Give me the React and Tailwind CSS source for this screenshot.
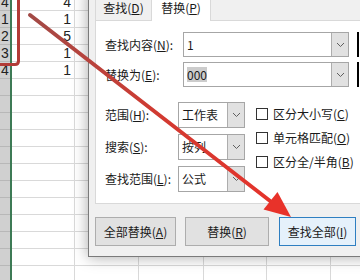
import React from "react";

const rows = [
  { head: "4", val: "4" },
  { head: "1", val: "1" },
  { head: "2", val: "5" },
  { head: "3", val: "1" },
  { head: "4", val: "1" },
];

// small chevron used by the combo boxes
const Chevron = () => (
  <svg width="9" height="6" viewBox="0 0 9 6">
    <polyline points="1,1 4.5,4.5 8,1" fill="none" stroke="#606060" strokeWidth="1" />
  </svg>
);

const Combo = ({ text, selected, className }) => (
  <div className={`flex h-full bg-white border border-[#a6a6a6] ${className}`}>
    <div className="flex-1 flex items-center pl-[3px]">
      {selected ? <span className="bg-[#cccccc] leading-[15px]">{text}</span> : text}
    </div>
    <div className="w-[17px] flex items-center justify-center bg-[#e1e1e1] border-l border-[#adadad]">
      <Chevron />
    </div>
  </div>
);

const Check = ({ children }) => (
  <div className="h-[24px] flex items-center gap-[5px]">
    <div className="w-[12px] h-[12px] border border-[#333333] bg-white" />
    <span>{children}</span>
  </div>
);

const Sheet = () => (
  <div className="-mt-[6px] flex flex-col font-['Liberation_Sans',sans-serif] text-[14px] text-[#222222]">
    {Array.from({ length: 18 }).map((_, i) => {
      const r = rows[i];
      return (
        <div key={i} className="flex h-[17px]">
          <div className="w-[12px] shrink-0 flex">
            <div className="w-[10px] bg-[#d0d0d0] border-b border-[#b8b8b8] text-center leading-[16px]">
              {r ? r.head : ""}
            </div>
            <div className="w-[2px] bg-[#3d7a55]" />
          </div>
          <div className="w-[63px] shrink-0 bg-white border-r border-b border-[#d9d9d9] text-right pr-[3px] leading-[16px]">
            {r ? r.val : ""}
          </div>
          <div className="w-[64px] shrink-0 bg-white border-r border-b border-[#d9d9d9]" />
          <div className="w-[65px] shrink-0 bg-white border-r border-b border-[#d9d9d9]" />
          <div className="w-[63px] shrink-0 bg-white border-r border-b border-[#d9d9d9]" />
          <div className="w-[64px] shrink-0 bg-white border-r border-b border-[#d9d9d9]" />
          <div className="flex-1 bg-white border-b border-[#d9d9d9]" />
        </div>
      );
    })}
  </div>
);

const Dialog = () => (
  <div className="absolute left-[88px] top-[-12px] w-[300px] h-[269px] flex flex-col bg-[#f0f0f0] border border-[#7a7a7a] shadow-[0_0_14px_rgba(0,0,0,0.35)] pl-[6px] font-['Noto_Sans_CJK_SC','Noto_Sans',sans-serif] text-[12px] text-[#1a1a1a]">
    {/* tabs */}
    <div className="h-[31px] flex items-end shrink-0">
      <div className="w-[56px] h-[26px] flex items-end justify-center pb-[5px] border-t border-l border-[#d9d9d9]">
        <span className="leading-[14px]">
          查找(<u>D</u>)
        </span>
      </div>
      <div className="relative z-10 -mb-px w-[60px] h-[30px] flex items-end justify-center pb-[6px] bg-white border-t border-l border-r border-[#d9d9d9]">
        <span className="leading-[14px]">
          替换(<u>P</u>)
        </span>
      </div>
    </div>

    {/* panel */}
    <div className="h-[184px] shrink-0 bg-white border border-[#d9d9d9] pt-[11px] pl-[9px] flex flex-col">
      <div className="h-[25px] flex items-center">
        <div className="w-[78px]">
          查找内容(<u>N</u>):
        </div>
        <Combo text="1" className="w-[166px]" />
        <div className="ml-[8px] w-[2px] h-full bg-black" />
      </div>
      <div className="mt-[5px] h-[25px] flex items-center">
        <div className="w-[78px]">
          替换为(<u>E</u>):
        </div>
        <Combo text="000" selected className="w-[166px]" />
        <div className="ml-[8px] w-[2px] h-full bg-black" />
      </div>

      <div className="mt-[15px] flex">
        <div className="flex flex-col gap-[6px]">
          <div className="h-[26px] flex items-center">
            <div className="w-[73px]">
              范围(<u>H</u>):
            </div>
            <Combo text="工作表" className="w-[67px]" />
          </div>
          <div className="h-[26px] flex items-center">
            <div className="w-[73px]">
              搜索(<u>S</u>):
            </div>
            <Combo text="按列" className="w-[67px]" />
          </div>
          <div className="h-[26px] flex items-center">
            <div className="w-[73px]">
              查找范围(<u>L</u>):
            </div>
            <Combo text="公式" className="w-[67px]" />
          </div>
        </div>
        <div className="ml-[11px] flex flex-col">
          <Check>
            区分大小写(<u>C</u>)
          </Check>
          <Check>
            单元格匹配(<u>O</u>)
          </Check>
          <Check>
            区分全/半角(<u>B</u>)
          </Check>
        </div>
      </div>
    </div>

    {/* buttons */}
    <div className="mt-[13px] h-[29px] flex shrink-0">
      <button className="w-[81px] h-full bg-[#e1e1e1] border border-[#adadad]">
        全部替换(<u>A</u>)
      </button>
      <button className="ml-[9px] w-[84px] h-full bg-[#e1e1e1] border border-[#adadad]">
        替换(<u>R</u>)
      </button>
      <button className="ml-[10px] w-[77px] h-full bg-[#e5f1fb] border border-[#2f7fc1]">
        查找全部(<u>I</u>)
      </button>
    </div>
  </div>
);

// red annotations drawn on top of everything
const Marks = () => (
  <svg className="absolute inset-0 pointer-events-none z-20" width="360" height="280" viewBox="0 0 360 280">
    <defs>
      <linearGradient id="arw" gradientUnits="userSpaceOnUse" x1="30" y1="15" x2="291" y2="217">
        <stop offset="0" stopColor="#a24a46" />
        <stop offset="0.5" stopColor="#d23a31" />
        <stop offset="1" stopColor="#e8322a" />
      </linearGradient>
    </defs>
    <path d="M 18.5 -5 V 61 Q 18.5 64.5 15 64.5 H -5" fill="none" stroke="#b23b37" strokeWidth="3" />
    <line x1="30" y1="15" x2="274" y2="204" stroke="url(#arw)" strokeWidth="4" strokeLinecap="round" />
    <polygon points="291,217 263.5,209.5 277.5,192" fill="#e8322a" />
  </svg>
);

const App = () => {
  return (
    <div className="relative w-[360px] h-[280px] overflow-hidden bg-white">
      <Sheet />
      <Dialog />
      <Marks />
    </div>
  );
};

export default App;
